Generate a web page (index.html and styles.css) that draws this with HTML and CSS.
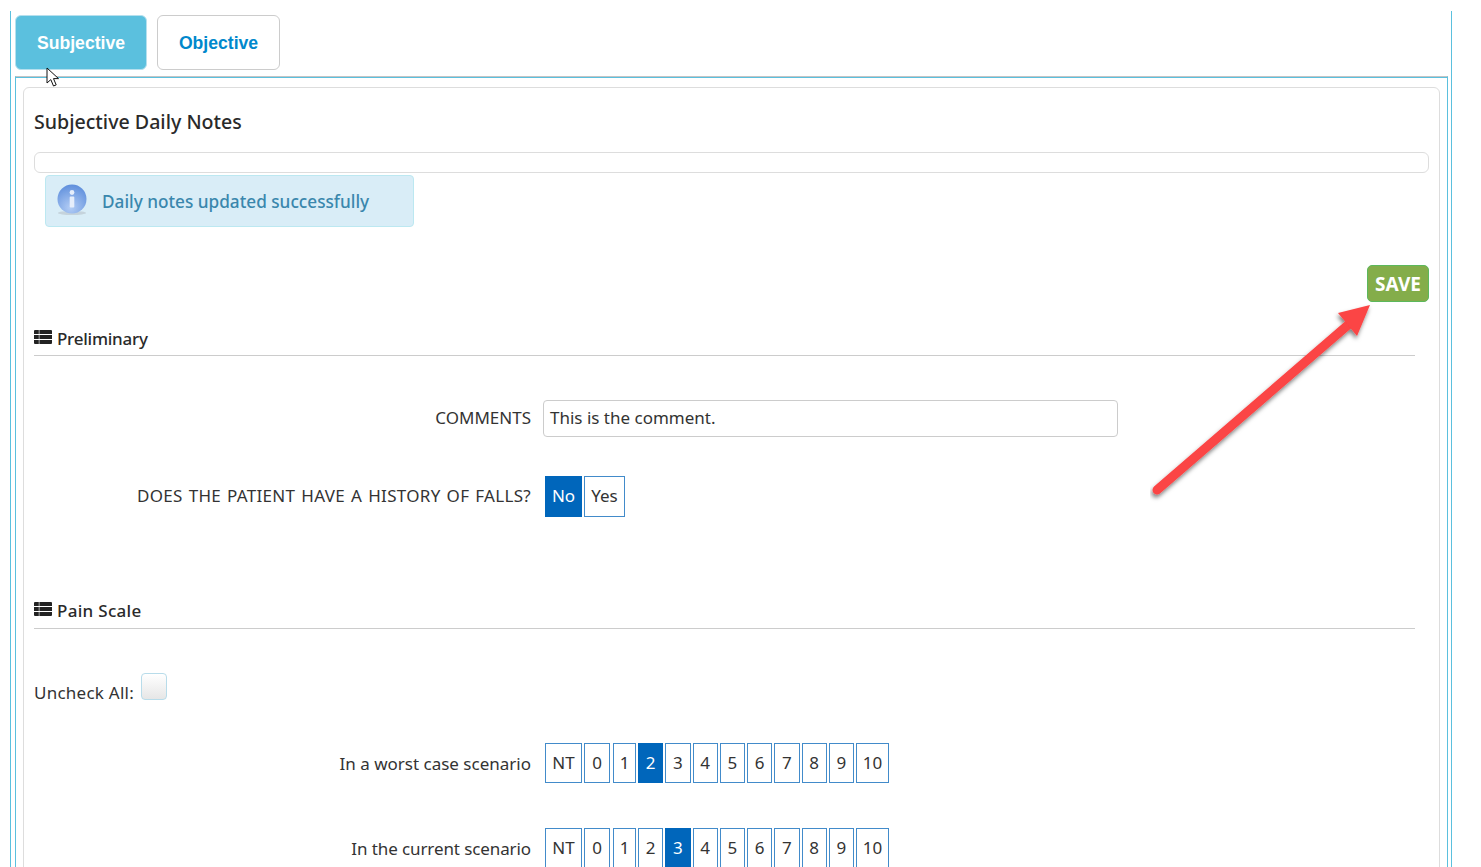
FILE: index.html
```html
<!DOCTYPE html>
<html lang="en">
<head>
<meta charset="utf-8">
<title>Subjective Daily Notes</title>
<link rel="stylesheet" href="styles.css">
</head>
<body>
<div class="shell">
  <nav class="tabs">
    <a class="tab tab-active">Subjective</a>
    <a class="tab">Objective</a>
  </nav>
  <div class="tab-content">
    <div class="panel">
      <h1 class="title">Subjective Daily Notes</h1>
      <div class="empty-box"></div>
      <div class="alert">
        <svg class="info-icon" width="32" height="32" viewBox="0 0 32 32">
          <defs>
            <radialGradient id="ig" cx="0.45" cy="0.8" r="0.8">
              <stop offset="0" stop-color="#b3cdf5"/>
              <stop offset="1" stop-color="#5f8fdc"/>
            </radialGradient>
          </defs>
          <ellipse cx="15" cy="29" rx="14" ry="2" fill="#c5d3dc"/>
          <circle cx="15" cy="15" r="14.5" fill="url(#ig)"/>
          <circle cx="15" cy="8.500" r="2.400" fill="#e6eefb"/>
          <rect x="12.700" y="12.500" width="4.600" height="11" rx="1" fill="#e6eefb"/>
        </svg>
        <span>Daily notes updated successfully</span>
      </div>
      <div class="save-row"><button class="save">SAVE</button></div>

      <h2 class="section-head section-first">
        <svg class="list-icon" width="18" height="14" viewBox="0 0 18 14"><path d="M0 1a1 1 0 0 1 1-1h3.800v4H0zM5.400 0H17a1 1 0 0 1 1 1v3H5.400zM0 4.900h4.800v4.200H0zM5.400 4.900H18v4.200H5.400zM0 10h4.800v4H1a1 1 0 0 1-1-1zM5.400 10H18v3a1 1 0 0 1-1 1H5.400z" fill="#222"/></svg>
        Preliminary
      </h2>
      <div class="form-row row-comments">
        <label class="form-label">COMMENTS</label>
        <div class="fake-input">This is the comment.</div>
      </div>
      <div class="form-row row-falls">
        <label class="form-label label-wide">DOES THE PATIENT HAVE A HISTORY OF FALLS?</label>
        <div class="choices">
          <span class="choice choice-tall on">No</span>
          <span class="choice choice-tall">Yes</span>
        </div>
      </div>

      <h2 class="section-head section-pain">
        <svg class="list-icon" width="18" height="14" viewBox="0 0 18 14"><path d="M0 1a1 1 0 0 1 1-1h3.800v4H0zM5.400 0H17a1 1 0 0 1 1 1v3H5.400zM0 4.900h4.800v4.200H0zM5.400 4.900H18v4.200H5.400zM0 10h4.800v4H1a1 1 0 0 1-1-1zM5.400 10H18v3a1 1 0 0 1-1 1H5.400z" fill="#222"/></svg>
        Pain Scale
      </h2>
      <div class="uncheck">
        <span>Uncheck All:</span>
        <span class="checkbox"></span>
      </div>
      <div class="form-row row-scale-1">
        <label class="form-label">In a worst case scenario</label>
        <div class="choices">
          <span class="choice w-nt">NT</span><span class="choice w-0">0</span><span class="choice w-1">1</span><span class="choice on">2</span><span class="choice">3</span><span class="choice">4</span><span class="choice">5</span><span class="choice">6</span><span class="choice">7</span><span class="choice">8</span><span class="choice">9</span><span class="choice w-10">10</span>
        </div>
      </div>
      <div class="form-row row-scale-2">
        <label class="form-label label-tight">In the current scenario</label>
        <div class="choices">
          <span class="choice w-nt">NT</span><span class="choice w-0">0</span><span class="choice w-1">1</span><span class="choice">2</span><span class="choice on">3</span><span class="choice">4</span><span class="choice">5</span><span class="choice">6</span><span class="choice">7</span><span class="choice">8</span><span class="choice">9</span><span class="choice w-10">10</span>
        </div>
      </div>
    </div>
  </div>
</div>

<svg class="arrow" width="240" height="210" viewBox="0 0 240 210">
  <defs>
    <filter id="sh" x="-20%" y="-20%" width="140%" height="140%">
      <feDropShadow dx="-1" dy="3" stdDeviation="2" flood-color="#000" flood-opacity="0.5"/>
    </filter>
  </defs>
  <g filter="url(#sh)">
    <line x1="7" y1="189" x2="198" y2="24" stroke="#fb4444" stroke-width="9" stroke-linecap="round"/>
    <polygon points="220,4 188,12 207,35" fill="#fb4444"/>
  </g>
</svg>

<svg class="cursor" width="16" height="22" viewBox="0 0 16 22">
  <path d="M1 1v15l3.800-3.400 2.700 6.400 2.700-1.100-2.700-6.300h5z" fill="#fff" stroke="#111" stroke-width="1"/>
</svg>
</body>
</html>
```
FILE: styles.css
```css
* { box-sizing: border-box; }
html, body {
  margin: 0;
  height: 867px;
  overflow: hidden;
  background: #fff;
}
body {
  position: relative;
  font-family: "Noto Sans", "Open Sans", sans-serif;
  color: #333;
  font-size: 16px;
}
.shell {
  margin: 11px 29px 0 10px;
  padding: 4px 3px 0 4px;
  border-left: 1px solid #5bc0de;
  border-right: 1px solid #5bc0de;
  height: 900px;
}
.tabs {
  display: flex;
  gap: 10px;
  height: 55px;
}
.tab {
  display: flex;
  align-items: center;
  justify-content: center;
  padding-top: 2px;
  border: 1px solid #ccc;
  border-radius: 6px;
  font-family: "Liberation Sans", Arial, sans-serif;
  font-weight: 700;
  font-size: 17.6px;
  color: #0088cc;
  width: 123px;
  background: #fff;
}
.tab-active {
  width: 132px;
  background: #5bc0de;
  border-color: #b5e0ee;
  color: #fff;
}
.tab-content {
  margin-top: 6px;
  border: 1px solid #5bc0de;
  border-top-color: #c4c4c4;
  box-shadow: inset 0 1px 0 #5bc0de;
  padding: 10px 7px 0 7px;
  height: 900px;
}
.panel {
  border: 1px solid #ddd;
  border-radius: 6px;
  padding: 21px 10px 0 10px;
  height: 900px;
}
.title {
  margin: 0;
  font-size: 19.6px;
  line-height: 26px;
  font-weight: 500;
  color: #2a2a2a;
}
.empty-box {
  margin-top: 17px;
  height: 21px;
  border: 1px solid #ddd;
  border-radius: 6px;
}
.alert {
  margin: 2px 0 0 11px;
  width: 369px;
  height: 52px;
  display: flex;
  align-items: center;
  gap: 13px;
  padding: 0 11px;
  background: #d9edf7;
  border: 1px solid #bce8f1;
  border-radius: 4px;
  color: #3a87ad;
  font-size: 17.2px;
  font-weight: 500;
}
.info-icon { flex: none; margin-bottom: 2px; }
.save-row {
  margin-top: 38px;
  display: flex;
  justify-content: flex-end;
}
.save {
  width: 62px;
  height: 37px;
  padding: 0;
  background: #84ad4a;
  border: 1px solid #5cb85c;
  border-radius: 5px;
  color: #fff;
  font-family: "Noto Sans", sans-serif;
  font-weight: 700;
  font-size: 19px;
}
.section-head {
  margin: 0 14px 0 0;
  height: 37px;
  display: flex;
  align-items: center;
  gap: 5px;
  font-size: 17px;
  font-weight: 500;
  color: #2a2a2a;
  border-bottom: 1px solid #ccc;
}
.section-first { margin-top: 17px; letter-spacing: -0.25px; padding-top: 2px; }
.list-icon { flex: none; margin-bottom: 2px; }
.form-row {
  display: flex;
  align-items: center;
}
.form-label {
  width: 497px;
  text-align: right;
  font-size: 17px;
  color: #333;
  flex: none;
}
.row-comments { margin-top: 44px; }
.row-comments .form-label { padding-bottom: 2px; }
.label-wide {
  letter-spacing: 0.3px;
  word-spacing: 1.3px;
  padding-bottom: 2px;
}
.label-tight { letter-spacing: -0.1px; }
.fake-input {
  margin-left: 12px;
  width: 575px;
  height: 37px;
  line-height: 33px;
  padding: 0 6px;
  border: 1px solid #ccc;
  border-radius: 4px;
  font-size: 17px;
  color: #333;
}
.row-falls { margin-top: 39px; }
.choices {
  margin-left: 14px;
  display: flex;
  gap: 2px;
}
.choice {
  display: flex;
  align-items: center;
  justify-content: center;
  width: 25.25px;
  height: 40px;
  padding-bottom: 2px;
  border: 1px solid #428bca;
  font-size: 17px;
  color: #333;
  background: #fff;
}
.choice.on {
  background: #0066bb;
  border-color: #0066bb;
  color: #fff;
}
.choice-tall { width: 41px; height: 41px; }
.choice-tall.on { width: 37px; }
.w-nt { width: 37px; }
.w-0 { width: 26px; margin-right: 1px; }
.w-1 { width: 23px; }
.w-10 { width: 33px; }
.section-pain { margin-top: 75px; letter-spacing: 0.3px; }
.uncheck {
  margin-top: 45px;
  display: flex;
  align-items: flex-end;
  gap: 7px;
  font-size: 17px;
  letter-spacing: 0.25px;
  height: 30px;
}
.checkbox {
  width: 26px;
  height: 27px;
  margin-bottom: 4px;
  border: 1px solid #b8dcea;
  border-radius: 4px;
  background: linear-gradient(#fff, #e6e6e6);
}
.row-scale-1 { margin-top: 39px; }
.row-scale-2 { margin-top: 45px; }
.arrow {
  position: absolute;
  left: 1150px;
  top: 301px;
}
.cursor {
  position: absolute;
  left: 46px;
  top: 67px;
}
```
